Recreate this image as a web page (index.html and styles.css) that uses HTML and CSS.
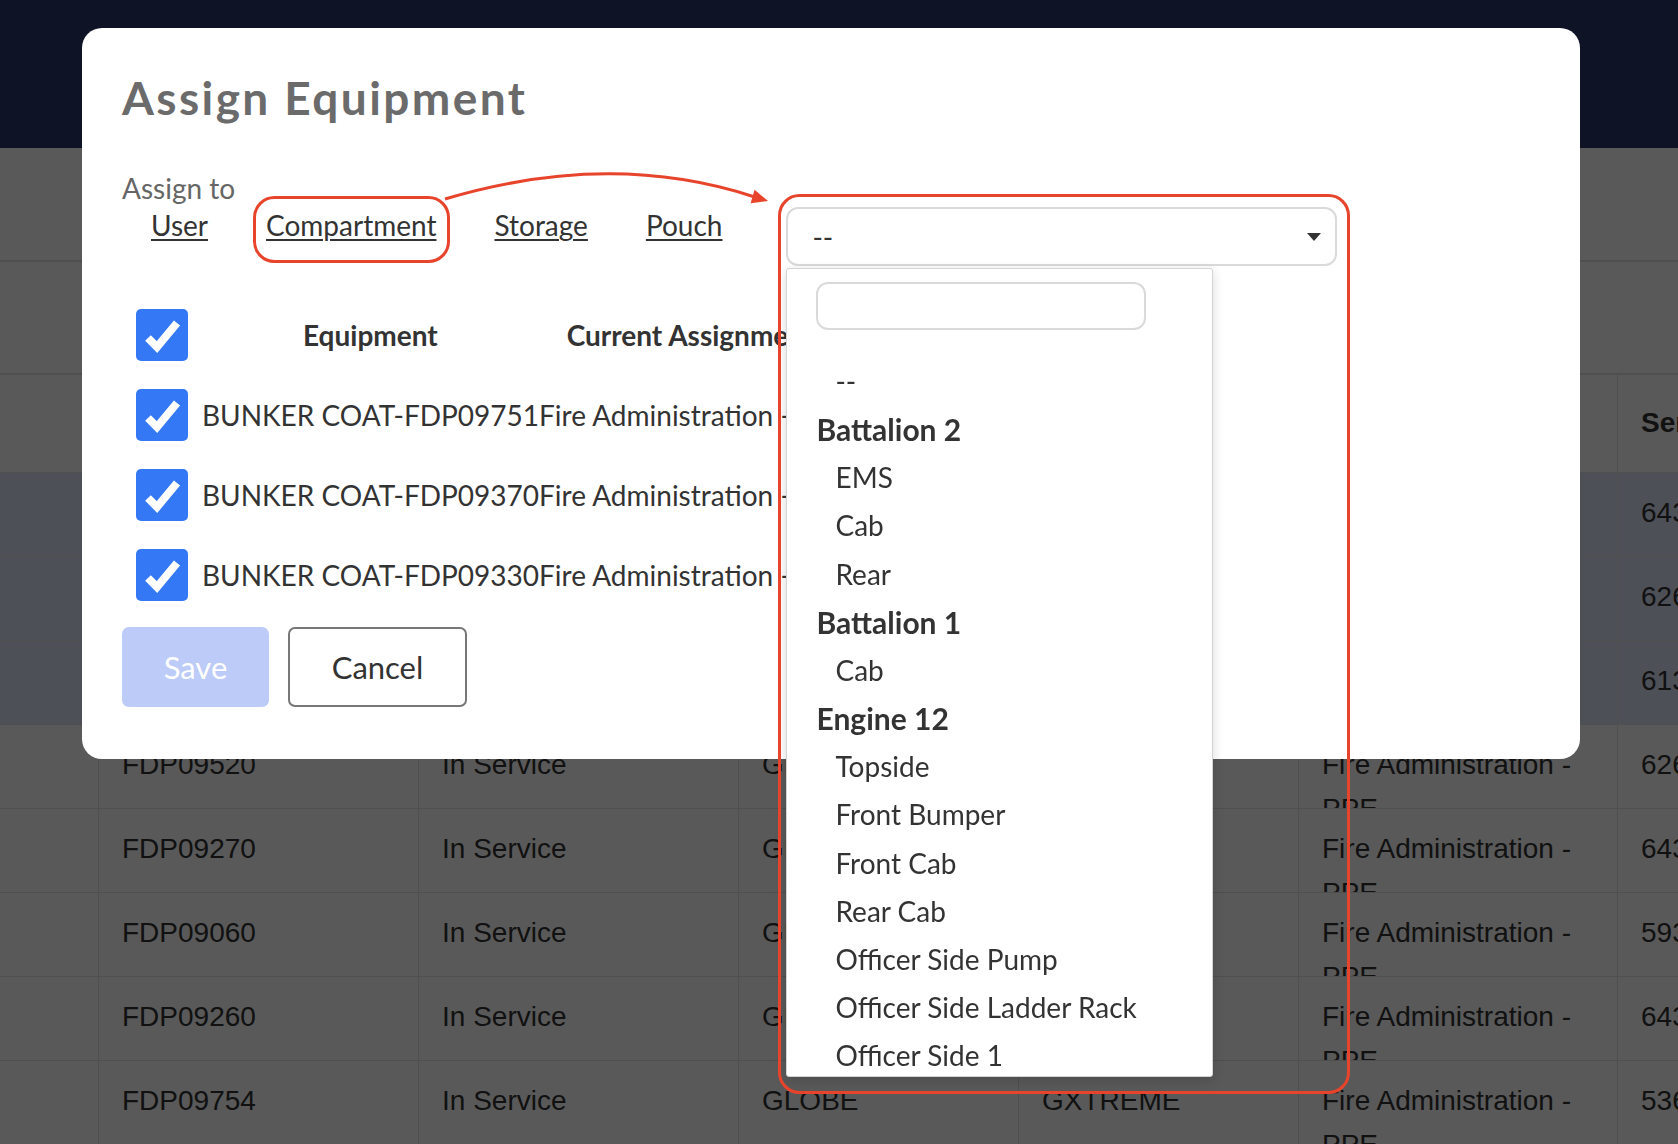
FILE: index.html
```html
<!DOCTYPE html>
<html>
<head>
    <title>Assign Equipment</title>
    <link rel="stylesheet" href="styles.css">
</head>
<body>
    <div class="page">
        <div class="topbar"></div>
        <div class="band"></div>
        <div class="band band-two"></div>

        <div class="grid">
            <div class="row head">
                <div class="cell"></div>
                <div class="cell">Equipment ID</div>
                <div class="cell">Status</div>
                <div class="cell">Brand</div>
                <div class="cell">Model</div>
                <div class="cell">Assigned To</div>
                <div class="cell">Serial Number</div>
            </div>
            <div class="row picked">
                <div class="cell"></div>
                <div class="cell">FDP09751</div>
                <div class="cell">In Service</div>
                <div class="cell">GLOBE</div>
                <div class="cell">GXTREME</div>
                <div class="cell">Fire Administration - PPE</div>
                <div class="cell">6431190</div>
            </div>
            <div class="row picked">
                <div class="cell"></div>
                <div class="cell">FDP09370</div>
                <div class="cell">In Service</div>
                <div class="cell">GLOBE</div>
                <div class="cell">GXTREME</div>
                <div class="cell">Fire Administration - PPE</div>
                <div class="cell">6260431</div>
            </div>
            <div class="row picked">
                <div class="cell"></div>
                <div class="cell">FDP09330</div>
                <div class="cell">In Service</div>
                <div class="cell">GLOBE</div>
                <div class="cell">GXTREME</div>
                <div class="cell">Fire Administration - PPE</div>
                <div class="cell">6139027</div>
            </div>
            <div class="row">
                <div class="cell"></div>
                <div class="cell">FDP09520</div>
                <div class="cell">In Service</div>
                <div class="cell">GLOBE</div>
                <div class="cell">GXTREME</div>
                <div class="cell">Fire Administration - PPE</div>
                <div class="cell">6260518</div>
            </div>
            <div class="row">
                <div class="cell"></div>
                <div class="cell">FDP09270</div>
                <div class="cell">In Service</div>
                <div class="cell">GLOBE</div>
                <div class="cell">GXTREME</div>
                <div class="cell">Fire Administration - PPE</div>
                <div class="cell">6431207</div>
            </div>
            <div class="row">
                <div class="cell"></div>
                <div class="cell">FDP09060</div>
                <div class="cell">In Service</div>
                <div class="cell">GLOBE</div>
                <div class="cell">GXTREME</div>
                <div class="cell">Fire Administration - PPE</div>
                <div class="cell">5931164</div>
            </div>
            <div class="row">
                <div class="cell"></div>
                <div class="cell">FDP09260</div>
                <div class="cell">In Service</div>
                <div class="cell">GLOBE</div>
                <div class="cell">GXTREME</div>
                <div class="cell">Fire Administration - PPE</div>
                <div class="cell">6431285</div>
            </div>
            <div class="row">
                <div class="cell"></div>
                <div class="cell">FDP09754</div>
                <div class="cell">In Service</div>
                <div class="cell">GLOBE</div>
                <div class="cell">GXTREME</div>
                <div class="cell">Fire Administration - PPE</div>
                <div class="cell">5360972</div>
            </div>
        </div>
    </div>

    <div class="backdrop"></div>

    <div class="modal">
        <h1>Assign Equipment</h1>

        <div class="assign-label">Assign to</div>
        <div class="assign-row">
            <a href="#" class="assign-link">User</a>
            <a href="#" class="assign-link">Compartment</a>
            <a href="#" class="assign-link">Storage</a>
            <a href="#" class="assign-link">Pouch</a>

            <div class="select-wrap">
                <div class="select-box">
                    <span>--</span>
                    <span class="caret"></span>
                </div>
                <div class="select-panel">
                    <input type="text" class="select-search">
                    <ul class="options">
                        <li class="opt">--</li>
                        <li class="opt-group">Battalion 2</li>
                        <li class="opt">EMS</li>
                        <li class="opt">Cab</li>
                        <li class="opt">Rear</li>
                        <li class="opt-group">Battalion 1</li>
                        <li class="opt">Cab</li>
                        <li class="opt-group">Engine 12</li>
                        <li class="opt">Topside</li>
                        <li class="opt">Front Bumper</li>
                        <li class="opt">Front Cab</li>
                        <li class="opt">Rear Cab</li>
                        <li class="opt">Officer Side Pump</li>
                        <li class="opt">Officer Side Ladder Rack</li>
                        <li class="opt">Officer Side 1</li>
                        <li class="opt">Officer Side 2</li>
                    </ul>
                </div>
            </div>
        </div>

        <div class="equip">
            <div class="equip-row">
                <span class="check"><svg viewBox="0 0 52 52"><polyline points="12,29 21,38 41,14"/></svg></span>
                <span class="th th-equip">Equipment</span>
                <span class="th th-current">Current Assignment</span>
            </div>
            <div class="equip-row">
                <span class="check"><svg viewBox="0 0 52 52"><polyline points="12,29 21,38 41,14"/></svg></span>
                <span class="equip-text">BUNKER COAT-FDP09751Fire Administration - PPE</span>
            </div>
            <div class="equip-row">
                <span class="check"><svg viewBox="0 0 52 52"><polyline points="12,29 21,38 41,14"/></svg></span>
                <span class="equip-text">BUNKER COAT-FDP09370Fire Administration - PPE</span>
            </div>
            <div class="equip-row">
                <span class="check"><svg viewBox="0 0 52 52"><polyline points="12,29 21,38 41,14"/></svg></span>
                <span class="equip-text">BUNKER COAT-FDP09330Fire Administration - PPE</span>
            </div>
        </div>

        <div class="actions">
            <button type="button" class="btn btn-save" disabled>Save</button>
            <button type="button" class="btn btn-cancel">Cancel</button>
        </div>
    </div>

    <!-- red review marks drawn over the screen -->
    <svg class="marks" viewBox="0 0 1678 1144">
        <rect x="254.5" y="197.5" width="194" height="64" rx="20"/>
        <rect x="779.5" y="195.5" width="569" height="897" rx="20"/>
        <path d="M445 199 Q610 150 753 196.5"/>
        <polygon points="768,201 750.6,203.2 754.6,189.8"/>
    </svg>
</body>
</html>
```

FILE: styles.css
```css
body {
    margin: 0;
    width: 1678px;
    height: 1144px;
    overflow: hidden;
    font-family: Lato, "Noto Sans", sans-serif;
    background: #fff;
}

/* page behind the dialog */
.topbar {
    height: 148px;
    background-color: #28396d;
}
.band {
    height: 112px;
    border-bottom: 2px solid #e2e2e2;
}
.band-two {
    height: 111px;
}

.grid {
    font-family: "Liberation Sans", Arial, sans-serif;
    font-size: 28px;
    color: #333;
}
.row {
    display: grid;
    grid-template-columns: 99px 320px 320px 280px 280px 319px 1fr;
    border-bottom: 1px solid #e2e2e2;
}
.row .cell {
    height: 83px;
    box-sizing: border-box;
    padding: 18px 22px 0 23px;
    line-height: 44px;
    overflow: hidden;
    border-right: 1px solid #e2e2e2;
}
.row .cell:last-child {
    border-right: none;
}
.row.head .cell {
    height: 97px;
    padding-top: 26px;
    font-weight: bold;
    white-space: nowrap;
}
.row.picked {
    background-color: #dfe6fd;
}

.backdrop {
    position: fixed;
    top: 0;
    left: 0;
    right: 0;
    bottom: 0;
    background: rgba(0, 0, 0, 0.65);
}

/* dialog */
.modal {
    position: absolute;
    top: 28px;
    left: 82px;
    width: 1498px;
    height: 731px;
    box-sizing: border-box;
    padding: 42px 40px 0;
    background: #fff;
    border-radius: 20px;
    color: #333;
}
.modal h1 {
    margin: 0;
    font-size: 46px;
    line-height: 55px;
    font-weight: bold;
    letter-spacing: 2.4px;
    color: #6b6b6b;
}

.assign-label {
    margin-top: 45px;
    font-size: 28px;
    line-height: 37px;
    color: #666;
}
.assign-row {
    display: flex;
    align-items: flex-start;
}
.assign-link {
    padding: 0 29px;
    font-size: 28px;
    line-height: 37px;
    color: #333;
    text-decoration: underline;
    text-decoration-thickness: 2px;
    text-underline-offset: 3px;
}

.select-wrap {
    position: relative;
    width: 551px;
    margin-left: 35px;
}
.select-box {
    height: 59px;
    box-sizing: border-box;
    border: 2px solid #dadada;
    border-radius: 12px;
    padding: 0 14px 0 24px;
    display: flex;
    align-items: center;
    justify-content: space-between;
    font-size: 28px;
}
.caret {
    width: 0;
    height: 0;
    border-left: 7.5px solid transparent;
    border-right: 7.5px solid transparent;
    border-top: 8px solid #333;
}
.select-panel {
    position: absolute;
    top: 61px;
    left: 0;
    width: 427px;
    height: 809px;
    box-sizing: border-box;
    padding: 13px 0 0 29px;
    background: #fff;
    border: 1px solid #d4d4d4;
    border-radius: 3px;
    box-shadow: 0 3px 12px rgba(0, 0, 0, 0.15);
    overflow: hidden;
    z-index: 2;
}
.select-search {
    display: block;
    width: 330px;
    height: 48px;
    box-sizing: border-box;
    border: 2px solid #dadada;
    border-radius: 12px;
    font-size: 24px;
}
.options {
    list-style: none;
    margin: 27px 0 0;
    padding: 0;
    font-size: 28px;
    line-height: 48.15px;
    color: #333;
}
.opt {
    padding-left: 19px;
}
.opt-group {
    font-size: 30px;
    font-weight: bold;
}

/* selected equipment list */
.equip {
    margin-top: 29px;
    font-size: 28px;
}
.equip-row {
    display: flex;
    align-items: center;
    height: 80px;
}
.check {
    flex: none;
    width: 52px;
    height: 52px;
    margin-left: 14px;
    background-color: #3478f6;
    border-radius: 5px;
}
.check svg {
    display: block;
    width: 52px;
    height: 52px;
}
.check polyline {
    fill: none;
    stroke: #fff;
    stroke-width: 8;
}
.th {
    font-weight: bold;
    white-space: nowrap;
}
.th-equip {
    margin-left: 115px;
}
.th-current {
    margin-left: 129px;
}
.equip-text {
    margin-left: 14px;
    white-space: nowrap;
}

.actions {
    display: flex;
    gap: 19px;
    margin-top: 12px;
}
.btn {
    height: 80px;
    box-sizing: border-box;
    border: 2px solid;
    border-radius: 7px;
    font-family: Lato, "Noto Sans", sans-serif;
    font-size: 31px;
    padding: 0;
}
.btn-save {
    width: 147px;
    background-color: #bccbf8;
    border-color: #bccbf8;
    color: #fff;
}
.btn-cancel {
    width: 179px;
    background-color: #fff;
    border-color: #777;
    color: #333;
}

.marks {
    position: absolute;
    top: 0;
    left: 0;
    width: 1678px;
    height: 1144px;
    pointer-events: none;
    z-index: 5;
}
.marks rect,
.marks path {
    fill: none;
    stroke: #e8442c;
    stroke-width: 3;
}
.marks polygon {
    fill: #e8442c;
}
```
